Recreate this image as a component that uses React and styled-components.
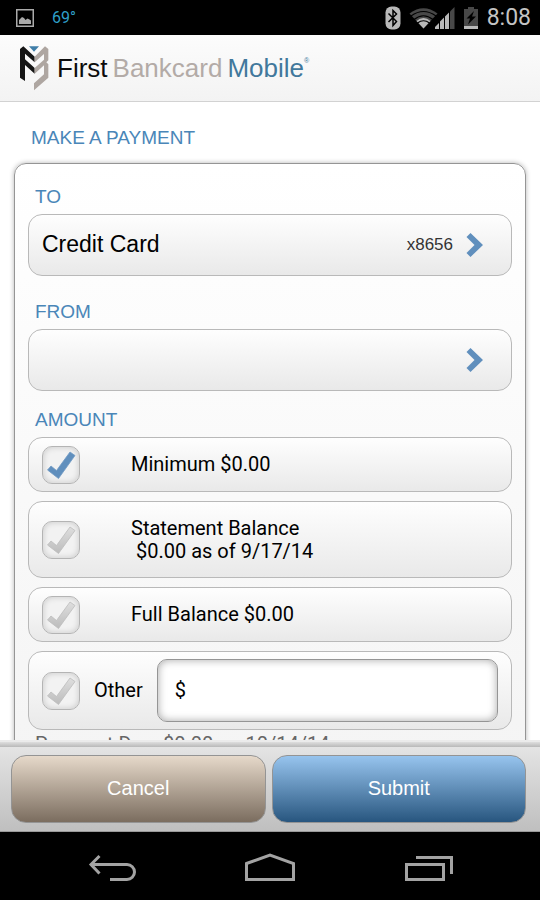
import React from "react";
import styled, { createGlobalStyle, css } from "styled-components";

const sans = `"Liberation Sans", Arial, sans-serif`;
const roboto = `Roboto, "Noto Sans", sans-serif`;
const blue = "#4a86b8";

const GlobalStyle = createGlobalStyle`
  *, *::before, *::after { box-sizing: border-box; }
  body { margin: 0; background: #000; }
  button, input { font: inherit; color: inherit; margin: 0; }
`;

const Screen = styled.div`
  display: flex;
  flex-direction: column;
  height: 100vh;
  background: #fff;
  color: #000;
  font-family: ${sans};
`;

const StatusBar = styled.div`
  flex: none;
  display: flex;
  align-items: center;
  justify-content: space-between;
  height: 35px;
  padding: 0 9px 0 16px;
  background: #000;
  font-family: ${roboto};
`;

const StatusGroup = styled.div`
  display: flex;
  align-items: center;
  gap: ${(p) => p.$gap}px;
`;

const Temperature = styled.span`
  color: #2f9fc9;
  font-size: 16px;
  line-height: 20px;
`;

const Clock = styled.time`
  color: #c4c4c4;
  font-size: 23px;
  line-height: 34px;
`;

const Header = styled.header`
  flex: none;
  display: flex;
  align-items: center;
  gap: 8px;
  height: 67px;
  padding: 0 19px;
  background: linear-gradient(#fcfcfc, #f3f3f3);
  border-bottom: 1px solid #d2d2d2;
`;

const Brand = styled.h1`
  display: flex;
  gap: 5px;
  margin: 0;
  font-size: 26px;
  line-height: 32px;
  font-weight: 400;
  color: #0c0c0c;
`;

const BrandPart = styled.span`
  color: ${(p) => p.$color};
`;

const Registered = styled.sup`
  font-size: 7px;
  line-height: 8px;
  vertical-align: 14px;
`;

const Content = styled.main`
  flex: 1;
  min-height: 0;
  overflow: hidden;
  padding: 24px 14px 0;
`;

const PageTitle = styled.h2`
  margin: 0 17px 13px;
  color: ${blue};
  font-size: 19px;
  line-height: 24px;
  font-weight: 400;
`;

const Panel = styled.form`
  padding: 21px 13px;
  border: 1px solid #959595;
  border-radius: 12px;
  background: linear-gradient(#fff, #f4f4f4);
  box-shadow: 0 0 5px rgba(0, 0, 0, 0.3);
`;

const SectionLabel = styled.h3`
  margin: ${(p) => p.$above || 0}px 7px 5px;
  color: ${blue};
  font-size: 19px;
  line-height: 24px;
  font-weight: 400;
`;

const rowSurface = css`
  display: flex;
  align-items: center;
  width: 100%;
  border: 1px solid #b9b9b9;
  border-radius: 14px;
  background: linear-gradient(#fefefe, #e9e9e9);
`;

const AccountButton = styled.button`
  ${rowSurface}
  gap: 13px;
  height: 62px;
  padding: 0 28px 0 13px;
  text-align: left;
  cursor: pointer;
`;

const AccountName = styled.span`
  flex: 1;
  padding-bottom: 3px;
  font-size: 23px;
  line-height: 28px;
`;

const AccountNumber = styled.span`
  color: #333;
  font-size: 17px;
  line-height: 24px;
`;

const Options = styled.div`
  display: flex;
  flex-direction: column;
  gap: 9px;
`;

const OptionRow = styled.div`
  ${rowSurface}
  gap: ${(p) => p.$gap || 51}px;
  min-height: ${(p) => p.$height || 55}px;
  padding: 0 13px;
  font-family: ${roboto};
  font-size: 20px;
  line-height: 23px;
`;

const OptionLabel = styled.label`
  white-space: pre-wrap;
`;

const CheckFrame = styled.span`
  flex: none;
  display: grid;
  width: 38px;
  height: 38px;

  & > * {
    grid-area: 1 / 1;
  }
  & > svg {
    pointer-events: none;
  }
`;

const CheckInput = styled.input`
  appearance: none;
  width: 38px;
  height: 38px;
  border: 1px solid #b4b4b4;
  border-radius: 10px;
  background: #f2f2f2;
  box-shadow: inset 0 0 6px rgba(0, 0, 0, 0.18);
`;

const AmountInput = styled.input`
  flex: 1;
  min-width: 0;
  height: 63px;
  padding: 0 17px 2px;
  border: 1px solid #959595;
  border-radius: 10px;
  background: #fff;
  box-shadow: inset 0 0 9px rgba(0, 0, 0, 0.35);
`;

const DueNote = styled.p`
  margin: 2px 7px 0;
  color: #666;
  font-family: ${roboto};
  font-size: 20px;
  line-height: 24px;
`;

const ActionBar = styled.footer`
  flex: none;
  border-top: 2px solid #ebebeb;
  border-bottom: 1px solid #999;
  background: linear-gradient(#e6e6e6, #bfbfbf);

  &::before {
    content: "";
    display: block;
    height: 5px;
    background: linear-gradient(#dedede, #b9b9b9);
  }
`;

const Actions = styled.div`
  display: flex;
  gap: 6px;
  padding: 8px 14px 8px 11px;
`;

const ActionButton = styled.button`
  flex: 1;
  height: 68px;
  padding: 0 0 2px;
  border: 1px solid #949494;
  border-radius: 15px;
  background: ${(p) =>
    p.$primary
      ? "linear-gradient(#97c4ee, #28567f)"
      : "linear-gradient(#e6d9ca, #7b6d5f)"};
  color: #fff;
  font-size: 20px;
  line-height: 24px;
  cursor: pointer;
`;

const NavBar = styled.nav`
  flex: none;
  display: flex;
  align-items: center;
  justify-content: center;
  gap: 108px;
  height: 68px;
  background: #000;
`;

const NavButton = styled.button`
  display: flex;
  padding: 0;
  border: 0;
  background: none;
  cursor: pointer;
`;

const PictureIcon = () => (
  <svg width="18" height="20" viewBox="0 0 18 20" aria-hidden="true">
    <rect x="0.75" y="1.75" width="16.5" height="16.5" fill="none" stroke="#aaa" strokeWidth="1.5" />
    <path d="M3 16v-4l3-3 2 1 1.5 2 2-1.500 2 1 1.500 1V16z" fill="#aaa" />
  </svg>
);

const BluetoothIcon = () => (
  <svg width="16" height="24" viewBox="0 0 16 24" aria-hidden="true">
    <rect x="0.5" y="0.5" width="15" height="23" rx="6" fill="#b9b9b9" />
    <path d="M3.500 7.500 11.500 15.500 8 19.500V4.500L11.500 8 3.500 16" fill="none" stroke="#000" strokeWidth="1.500" />
  </svg>
);

const SignalIcons = () => (
  <svg width="46" height="24" viewBox="0 0 46 24" aria-hidden="true">
    <path d="M0.500 7.500Q14.500-3 28.500 7.500L14.500 22.500z" fill="#484848" />
    <path d="M7.500 15Q14.500 9 21.500 15L14.500 22.500z" fill="#b9b9b9" />
    <g fill="none" stroke="#000" strokeWidth="1.2">
      <path d="M2 10Q14.500 1 27 10" />
      <path d="M5 13.500Q14.500 6 24 13.500" />
      <path d="M8.500 17Q14.500 12.500 20.500 17" />
    </g>
    <path d="M41 5.500 45.500 1V23H41z" fill="#484848" />
    <path d="M26 23v-2l4-4V23zM31 23v-7.500l4-4V23zM36 23V10.500l4-4V23z" fill="#b9b9b9" />
  </svg>
);

const BatteryIcon = () => (
  <svg width="16" height="24" viewBox="0 0 16 24" aria-hidden="true">
    <path d="M5 1h6v2h4v17H1V3h4z" fill="#484848" />
    <path d="M1 20h14v3H1z" fill="#b9b9b9" />
    <path d="M11 5 3.500 12.500H7l-2 6 8-8H9z" fill="#000" />
  </svg>
);

const BrandMark = () => (
  <svg width="30" height="46" viewBox="0 0 90 138" aria-hidden="true">
    <path d="M30 4H60L45 20z" fill="#3f7ea8" />
    <path d="M3 12 13 4 47 35V52L18 26V43L47 69V86L18 60V108L3 98z" fill="#151515" />
    <path d="M88 12 78 4 47 35V52L75 27V44L47 69V86L75 61V88L45 115V136L88 98V58L82 52 88 46z" fill="#aea6a1" />
  </svg>
);

const Chevron = () => (
  <svg width="17" height="26" viewBox="0 0 17 26" aria-hidden="true">
    <path d="M4.500 1 17 13 4.500 25 .5 21 8.500 13 .5 5z" fill="#608fbd" />
  </svg>
);

const TickIcon = ({ active }) => (
  <svg width="38" height="38" viewBox="0 0 38 38" aria-hidden="true">
    <defs>
      <linearGradient id="tickGray" x1="0" y1="0" x2="0" y2="1">
        <stop offset="0" stopColor="#dedede" />
        <stop offset="1" stopColor="#bcbcbc" />
      </linearGradient>
    </defs>
    <path
      d="M5.500 24 9 20 14.500 24.500 28 6 33 9.500 16.500 32.500z"
      fill={active ? "#608fbd" : "url(#tickGray)"}
      stroke={active ? "#719bc4" : "#bdbdbd"}
      strokeWidth="0.8"
      strokeLinejoin="round"
    />
  </svg>
);

const navStroke = { fill: "none", stroke: "#a3a3a3", strokeWidth: 3 };

const BackIcon = () => (
  <svg width="50" height="30" viewBox="0 0 50 30" aria-hidden="true" {...navStroke}>
    <path d="M12.500 5 4 13.500 12.500 22.500M4 13.500H40A7.500 7.500 0 0 1 40 28.500H23" />
  </svg>
);

const HomeIcon = () => (
  <svg width="50" height="30" viewBox="0 0 50 30" aria-hidden="true" {...navStroke}>
    <path d="M1.500 12.500 25 4 48.500 12.500V28.500H1.500z" />
  </svg>
);

const RecentIcon = () => (
  <svg width="50" height="30" viewBox="0 0 50 30" aria-hidden="true" {...navStroke}>
    <path d="M3.500 13.500H40.500V28.500H3.500zM13 6.500H48.500V23" />
  </svg>
);

const CheckBox = ({ id, checked, onChange }) => (
  <CheckFrame>
    <CheckInput id={id} type="checkbox" checked={checked} onChange={onChange} />
    <TickIcon active={checked} />
  </CheckFrame>
);

export default function App() {
  const [selected, setSelected] = React.useState("minimum");
  const [amount, setAmount] = React.useState("$");
  const box = (id) => (
    <CheckBox id={id} checked={selected === id} onChange={() => setSelected(id)} />
  );

  return (
    <Screen>
      <GlobalStyle />
      <StatusBar>
        <StatusGroup $gap={18}>
          <PictureIcon />
          <Temperature>69°</Temperature>
        </StatusGroup>
        <StatusGroup $gap={8}>
          <BluetoothIcon />
          <SignalIcons />
          <BatteryIcon />
          <Clock>8:08</Clock>
        </StatusGroup>
      </StatusBar>

      <Header>
        <BrandMark />
        <Brand>
          <span>First</span>
          <BrandPart $color="#b3aba7">Bankcard</BrandPart>
          <BrandPart $color="#41789c">
            Mobile<Registered>®</Registered>
          </BrandPart>
        </Brand>
      </Header>

      <Content>
        <PageTitle>MAKE A PAYMENT</PageTitle>
        <Panel onSubmit={(e) => e.preventDefault()} id="payment">
          <SectionLabel id="to">TO</SectionLabel>
          <AccountButton type="button" aria-describedby="to">
            <AccountName>Credit Card</AccountName>
            <AccountNumber>x8656</AccountNumber>
            <Chevron />
          </AccountButton>

          <SectionLabel id="from" $above={24}>FROM</SectionLabel>
          <AccountButton type="button" aria-labelledby="from">
            <AccountName />
            <Chevron />
          </AccountButton>

          <SectionLabel $above={17}>AMOUNT</SectionLabel>
          <Options>
            <OptionRow>
              {box("minimum")}
              <OptionLabel htmlFor="minimum">Minimum $0.00</OptionLabel>
            </OptionRow>
            <OptionRow $height={77}>
              {box("statement")}
              <OptionLabel htmlFor="statement">{"Statement Balance\n $0.00 as of 9/17/14"}</OptionLabel>
            </OptionRow>
            <OptionRow>
              {box("full")}
              <OptionLabel htmlFor="full">Full Balance $0.00</OptionLabel>
            </OptionRow>
            <OptionRow $height={79} $gap={14}>
              {box("other")}
              <OptionLabel htmlFor="other">Other</OptionLabel>
              <AmountInput
                type="text"
                aria-label="Other amount"
                value={amount}
                onChange={(e) => setAmount(e.target.value)}
              />
            </OptionRow>
          </Options>
          <DueNote>Payment Due: $0.00 on 10/14/14</DueNote>
        </Panel>
      </Content>

      <ActionBar>
        <Actions>
          <ActionButton type="button">Cancel</ActionButton>
          <ActionButton type="submit" form="payment" $primary>Submit</ActionButton>
        </Actions>
      </ActionBar>

      <NavBar>
        <NavButton type="button" aria-label="Back"><BackIcon /></NavButton>
        <NavButton type="button" aria-label="Home"><HomeIcon /></NavButton>
        <NavButton type="button" aria-label="Recent apps"><RecentIcon /></NavButton>
      </NavBar>
    </Screen>
  );
}
